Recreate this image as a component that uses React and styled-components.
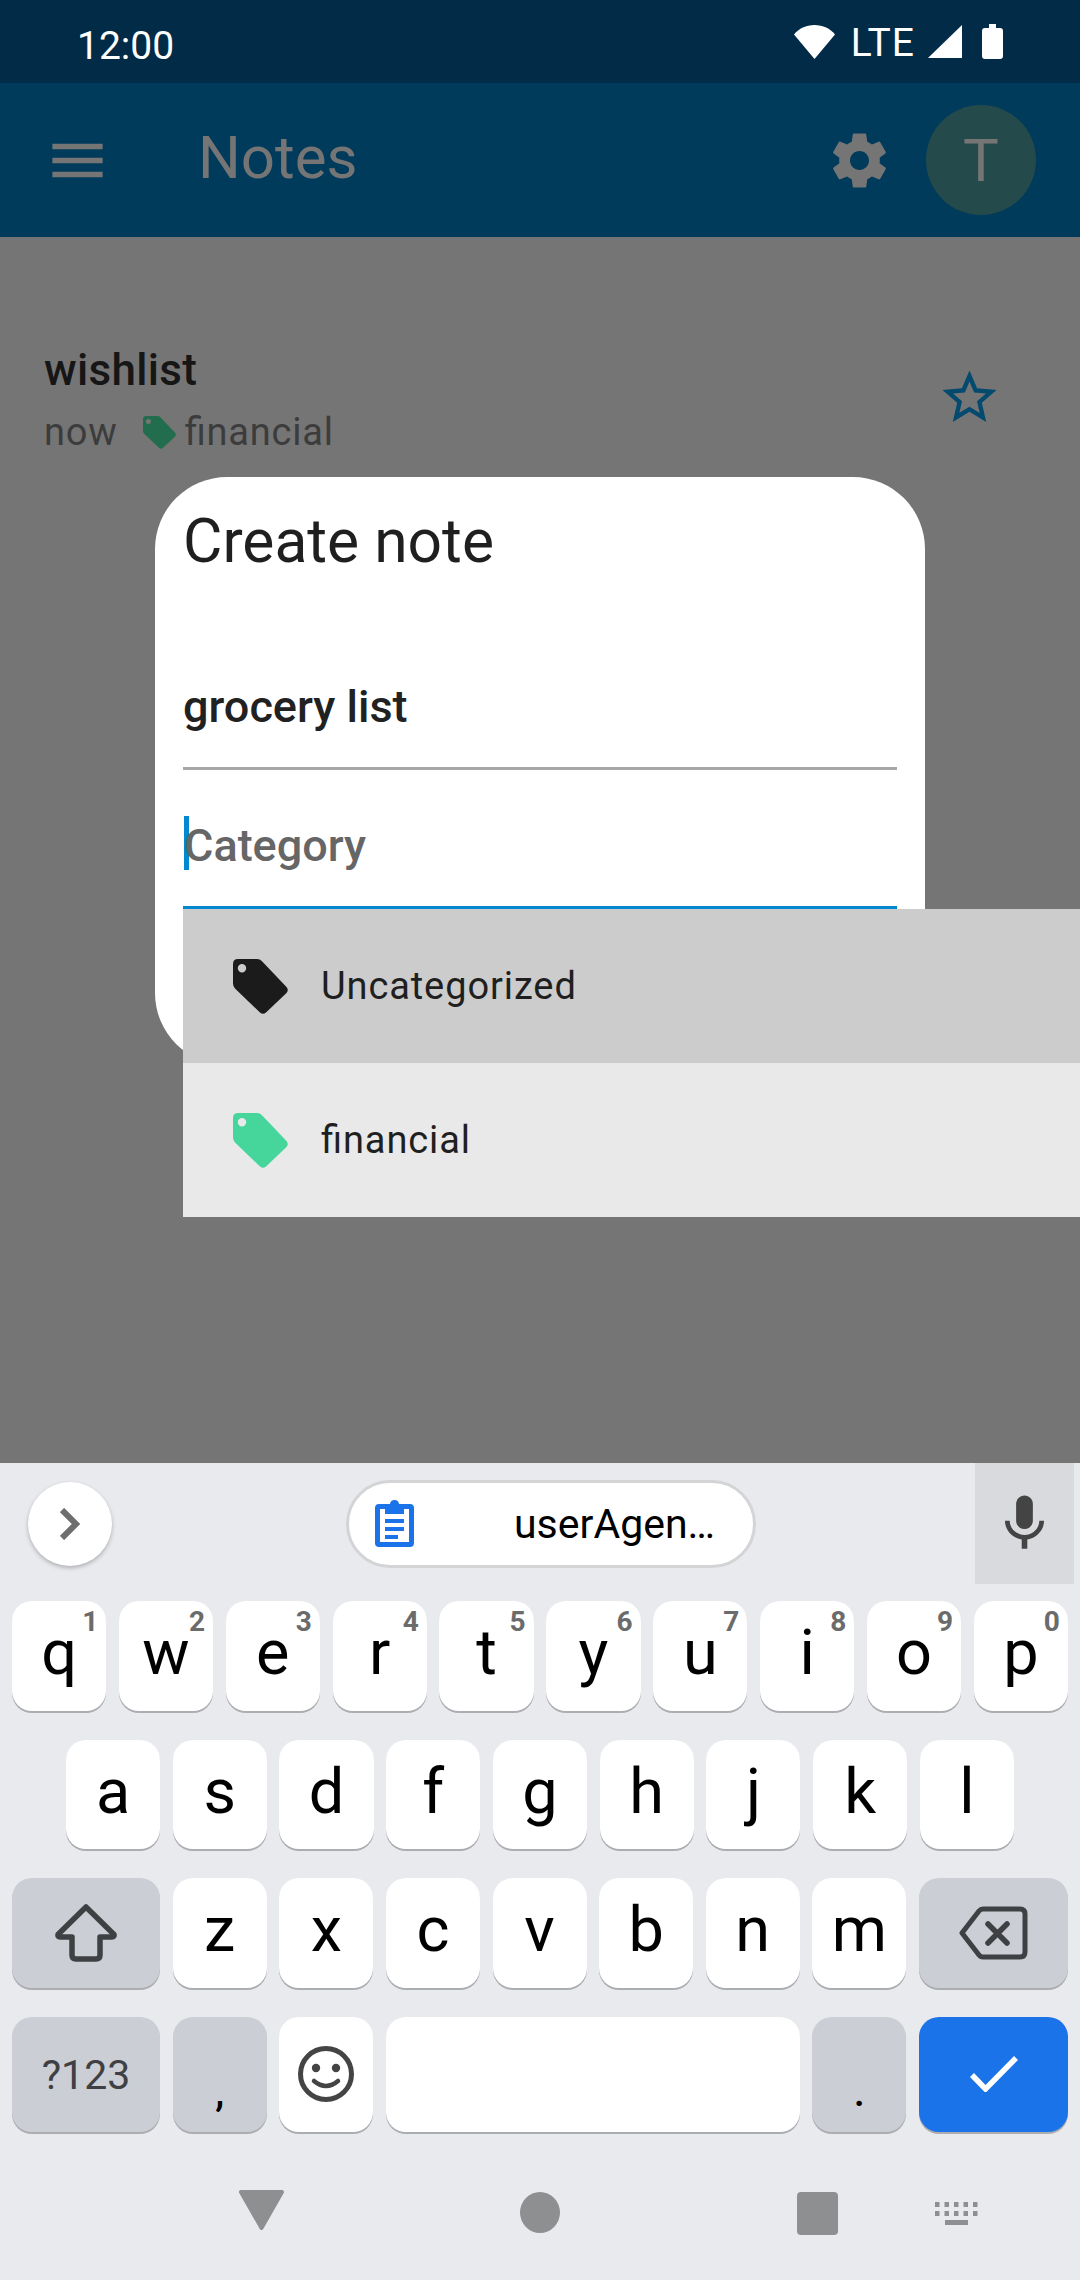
import React from "react";
import styled, { createGlobalStyle } from "styled-components";

const Global = createGlobalStyle`
  html, body { margin: 0; padding: 0; background: #757575; }
  * { box-sizing: border-box; }
  body { font-family: Roboto, "Noto Sans", sans-serif; }
`;

const Page = styled.div`
  width: 1080px; height: 2280px; display: flex; flex-direction: column; overflow: hidden;
`;
const StatusBar = styled.div`
  height: 83px; background: #012b46; display: flex; align-items: center; padding: 0 77px 0 77px; color: #fff;
`;
const Time = styled.div`
  font-size: 39px; line-height: 46px; margin-top: 9px; margin-right: auto;
`;
const Lte = styled.div`
  font-size: 39px; line-height: 46px; margin: 2px 13px 0 16px; letter-spacing: 1px;
`;
const BatteryIcon = styled.svg` margin-left: 20px; display: block; `;
const Plain = styled.svg` display: block; flex: none; `;
const Header = styled.div`
  height: 154px; background: #013b5b; display: flex; align-items: center; padding: 0 44px; color: #757575;
`;
const Title = styled.div`
  font-size: 60px; line-height: 70px; margin-left: 87px; margin-bottom: 4px;
`;
const Gear = styled.svg` display: block; margin-left: auto; margin-right: 34px; `;
const Avatar = styled.div`
  width: 110px; height: 110px; border-radius: 50%; background: #254a4c; color: #757575;
  display: flex; align-items: center; justify-content: center; font-size: 60px;
`;
const Body = styled.div`
  position: relative; flex: 1; background: #757575; padding: 108px 78px 0 44px;
`;
const NoteItem = styled.div`
  display: flex; justify-content: space-between; align-items: center;
`;
const NoteText = styled.div` display: flex; flex-direction: column; gap: 14px; `;
const NoteName = styled.div`
  font-size: 44px; line-height: 50px; font-weight: 500; color: #161616; letter-spacing: 0.3px;
`;
const NoteMeta = styled.div`
  display: flex; align-items: center; font-size: 38px; line-height: 46px; color: #3c3c3c; letter-spacing: 0.8px;
  font-feature-settings: "liga" 1;
`;
const MetaTag = styled.svg` display: block; margin: 0 9px 0 25px; `;
const Star = styled.svg` display: block; margin-bottom: 6px; `;
const Dialog = styled.div`
  position: absolute; left: 155px; top: 240px; width: 770px; height: 588px; background: #fff;
  border-radius: 72px; padding: 30px 28px 0 28px;
`;
const DialogTitle = styled.div`
  font-size: 60.5px; line-height: 70px; color: #1f1f1f; margin-bottom: 54px;
`;
const Field = styled.div`
  height: 139px; padding: 46px 0 36px; border-bottom: 3px solid ${p => p.$focus ? "#0288d1" : "#a6a6a6"};
  font-size: 45px; line-height: 54px; font-weight: 500; color: ${p => p.$focus ? "#666" : "#212121"};
  display: flex; align-items: flex-start;
`;
const FieldText = styled.span` margin-top: 3px; `;
const Caret = styled.span`
  width: 5px; height: 54px; background: #0288d1; margin-left: 1px; margin-right: -5px; flex: none;
`;
const Dropdown = styled.div`
  position: absolute; left: 183px; right: 0; top: 672px;
`;
const Option = styled.div`
  height: 154px; background: ${p => p.$bg}; display: flex; align-items: center; padding-left: 50px;
  font-size: 38px; color: #1f1f1f; letter-spacing: 0.9px; font-feature-settings: "liga" 1;
`;
const OptionTag = styled.svg` display: block; margin-right: 33px; flex: none; `;

const Keyboard = styled.div`
  height: 817px; background: #e8eaed; display: flex; flex-direction: column;
`;
const Strip = styled.div`
  height: 138px; display: flex; align-items: flex-start; padding-left: 28px;
`;
const StripInner = styled.div`
  height: 121px; display: flex; align-items: center; flex: 1;
`;
const ExpandBtn = styled.div`
  width: 84px; height: 84px; border-radius: 50%; background: #fff; box-shadow: 0 2px 4px rgba(0,0,0,.25);
  display: flex; align-items: center; justify-content: center;
`;
const Pill = styled.div`
  width: 410px; height: 88px; margin-left: 234px; border-radius: 44px; background: #fff; border: 3px solid #d3d4d6;
  display: flex; align-items: center; padding-left: 26px; font-size: 41px; color: #000;
`;
const PillText = styled.span` margin-left: 100px; white-space: nowrap; `;
const MicPanel = styled.div`
  width: 99px; height: 121px; background: #d9dade; margin-left: 219px; display: flex; align-items: center; justify-content: center;
`;
const Rows = styled.div`
  display: flex; flex-direction: column; gap: 29px; padding: 0 12px;
`;
const Row = styled.div`
  display: flex; gap: 12.67px; padding: 0 ${p => p.$inset || 0}px;
`;
const Key = styled.div`
  position: relative; height: ${p => p.$h || 109.5}px; flex: ${p => p.$w ? `0 0 ${p.$w}px` : "1 1 0"};
  border-radius: 20px;
  background: ${p => p.$bg || "#fff"};
  box-shadow: 0 2px 0 #acadb0;
  display: flex; align-items: center; justify-content: center;
  color: #000; font-size: 63px; line-height: 72px; padding-bottom: ${p => p.$pb ?? 5}px;
`;
const Hint = styled.span`
  position: absolute; right: 8px; top: 5px; font-size: 28px; line-height: 32px; font-weight: 700; color: #6b6b6b;
`;
const ModKey = styled.span`
  font-size: 41px; line-height: 48px; color: #3f4043; margin-top: 2px;
`;
const Punct = styled.span`
  font-size: 40px; line-height: 48px; color: #000; font-weight: 500; margin-top: 38px;
`;
const NavBar = styled.div`
  flex: 1; display: flex; align-items: flex-start; padding: 57px 0 0 238px;
`;
const NavItem = styled.svg` display: block; margin-right: ${p => p.$mr}px; margin-top: ${p => p.$mt || 0}px; flex: none; `;

const tagPath = "M5 0H24Q27 0 29 2.2L53.5 28Q56 31 53.5 34L33 53.5Q30 56 27 53.5L2 29.5Q0 27.5 0 24.5V5Q0 0 5 0ZM9 5A4.2 4.2 0 1 0 9 13.4A4.2 4.2 0 1 0 9 5Z";
const TagIcon = ({ color, size, as: C = OptionTag }) => (
  <C width={size} height={size} viewBox="0 0 55 55">
    <path d={tagPath} fill={color} fillRule="evenodd" />
  </C>
);

const top = ["q","w","e","r","t","y","u","i","o","p"];
const hints = ["1","2","3","4","5","6","7","8","9","0"];
const mid = ["a","s","d","f","g","h","j","k","l"];
const low = ["z","x","c","v","b","n","m"];
const MOD = "#cbced5";

export default function App() {
  return (
    <Page>
      <Global />
      <StatusBar>
        <Time>12:00</Time>
        <Plain width="41" height="34" viewBox="0 0 41 34">
          <path d="M20.5 34L0 9.5C5 3.5 12 0 20.5 0S36 3.5 41 9.5Z" fill="#fff" />
        </Plain>
        <Lte>LTE</Lte>
        <Plain width="34" height="33" viewBox="0 0 34 33">
          <path d="M0 33L34 0V33Z" fill="#fff" />
        </Plain>
        <BatteryIcon width="21" height="35" viewBox="0 0 21 35">
          <path d="M7 0H14V4H18Q21 4 21 7V32Q21 35 18 35H3Q0 35 0 32V7Q0 4 3 4H7Z" fill="#fff" />
        </BatteryIcon>
      </StatusBar>
      <Header>
        <Plain width="67" height="67" viewBox="0 0 24 24">
          <path d="M3 18h18v-2H3v2zm0-5h18v-2H3v2zm0-7v2h18V6H3z" fill="#757575" />
        </Plain>
        <Title>Notes</Title>
        <Gear width="65" height="65" viewBox="0 0 24 24">
          <path fill="#757575" d="M19.43 12.98c.04-.32.07-.64.07-.98s-.03-.66-.07-.98l2.11-1.65c.19-.15.24-.42.12-.64l-2-3.46c-.12-.22-.39-.3-.61-.22l-2.49 1c-.52-.4-1.08-.73-1.69-.98l-.38-2.65C14.46 2.18 14.25 2 14 2h-4c-.25 0-.46.18-.49.42l-.38 2.65c-.61.25-1.17.59-1.69.98l-2.49-1c-.23-.09-.49 0-.61.22l-2 3.46c-.13.22-.07.49.12.64l2.11 1.65c-.04.32-.07.65-.07.98s.03.66.07.98l-2.11 1.65c-.19.15-.24.42-.12.64l2 3.46c.12.22.39.3.61.22l2.49-1c.52.4 1.08.73 1.69.98l.38 2.65c.03.24.24.42.49.42h4c.25 0 .46-.18.49-.42l.38-2.65c.61-.25 1.17-.59 1.69-.98l2.49 1c.23.09.49 0 .61-.22l2-3.46c.12-.22.07-.49-.12-.64l-2.11-1.65zM12 15.5c-1.93 0-3.5-1.57-3.5-3.5s1.57-3.5 3.5-3.5 3.5 1.57 3.5 3.5-1.57 3.5-3.5 3.5z" />
        </Gear>
        <Avatar>T</Avatar>
      </Header>
      <Body>
        <NoteItem>
          <NoteText>
            <NoteName>wishlist</NoteName>
            <NoteMeta>
              now
              <TagIcon as={MetaTag} color="#226d4d" size={33} />
              financial
            </NoteMeta>
          </NoteText>
          <Star width="65" height="65" viewBox="0 0 24 24">
            <path fill="#034a6e" d="M22 9.24l-7.19-.62L12 2 9.19 8.63 2 9.24l5.46 4.73L5.82 21 12 17.27 18.18 21l-1.63-7.03L22 9.24zM12 15.4l-3.76 2.27 1-4.28-3.32-2.88 4.38-.38L12 6.1l1.71 4.04 4.38.38-3.32 2.88 1 4.28L12 15.4z" />
          </Star>
        </NoteItem>
        <Dialog>
          <DialogTitle>Create note</DialogTitle>
          <Field><FieldText>grocery list</FieldText></Field>
          <Field $focus><Caret /><FieldText>Category</FieldText></Field>
        </Dialog>
        <Dropdown>
          <Option $bg="#cccccc">
            <TagIcon color="#1b1b1b" size={55} />
            Uncategorized
          </Option>
          <Option $bg="#e9e9e9">
            <TagIcon color="#46d69c" size={55} />
            financial
          </Option>
        </Dropdown>
      </Body>
      <Keyboard>
        <Strip>
          <StripInner>
            <ExpandBtn>
              <Plain width="20" height="32" viewBox="0 0 20 32">
                <path d="M2 2L16 16L2 30" fill="none" stroke="#6e6e6e" strokeWidth="6" />
              </Plain>
            </ExpandBtn>
            <Pill>
              <Plain width="39" height="47" viewBox="0 0 39 47">
                <path d="M12 4H15Q15.5 0 19.5 0T24 4H35Q39 4 39 8V43Q39 47 35 47H4Q0 47 0 43V8Q0 4 4 4Z M5 9V42H34V9H29V14H10V9Z" fill="#1a73e8" fillRule="evenodd" />
                <path d="M10 19H29V23H10ZM10 27H29V31H10ZM10 35H23V39H10Z" fill="#1a73e8" />
              </Plain>
              <PillText>userAgen…</PillText>
            </Pill>
            <MicPanel>
              <Plain width="67" height="67" viewBox="0 0 24 24">
                <path fill="#444" d="M12 14c1.66 0 2.99-1.34 2.99-3L15 5c0-1.66-1.34-3-3-3S9 3.34 9 5v6c0 1.66 1.34 3 3 3zm5.3-3c0 3-2.54 5.1-5.3 5.1S6.7 14 6.7 11H5c0 3.41 2.72 6.23 6 6.72V21h2v-3.28c3.28-.48 6-3.3 6-6.72h-1.7z" />
              </Plain>
            </MicPanel>
          </StripInner>
        </Strip>
        <Rows>
          <Row>
            {top.map((k, i) => (
              <Key key={k}>{k}<Hint>{hints[i]}</Hint></Key>
            ))}
          </Row>
          <Row $inset={54}>
            {mid.map(k => <Key key={k}>{k}</Key>)}
          </Row>
          <Row>
            <Key $w={148} $bg={MOD} $pb={0}>
              <Plain width="62" height="58" viewBox="0 0 62 58">
                <path d="M31 3L59 30.5Q59.5 33 57 33H45V51Q45 55 41 55H21Q17 55 17 51V33H5Q2.5 33 3 30.5Z" fill="none" stroke="#3f4043" strokeWidth="5.5" strokeLinejoin="round" />
              </Plain>
            </Key>
            {low.map(k => <Key key={k}>{k}</Key>)}
            <Key $w={149} $bg={MOD} $pb={0}>
              <Plain width="69" height="54" viewBox="0 0 69 54">
                <path d="M3 27L20 5Q21.5 3 24 3H61Q66 3 66 8V46Q66 51 61 51H24Q21.5 51 20 49Z" fill="none" stroke="#3f4043" strokeWidth="5" strokeLinejoin="round" />
                <path d="M29 18L48 37M48 18L29 37" fill="none" stroke="#3f4043" strokeWidth="5.5" strokeLinecap="round" />
              </Plain>
            </Key>
          </Row>
          <Row>
            <Key $w={148} $h={115} $bg={MOD} $pb={0}><ModKey>?123</ModKey></Key>
            <Key $w={94} $h={115} $bg={MOD} $pb={0}><Punct>,</Punct></Key>
            <Key $w={94} $h={115} $pb={0}>
              <Plain width="56" height="56" viewBox="0 0 56 56">
                <circle cx="28" cy="28" r="25.5" fill="none" stroke="#444" strokeWidth="5" />
                <circle cx="18" cy="22" r="4.2" fill="#444" />
                <circle cx="38" cy="22" r="4.2" fill="#444" />
                <path d="M16 35Q28 45 40 35" fill="none" stroke="#444" strokeWidth="4.5" strokeLinecap="round" />
              </Plain>
            </Key>
            <Key $h={115} />
            <Key $w={94} $h={115} $bg={MOD} $pb={0}><Punct>.</Punct></Key>
            <Key $w={149} $h={115} $bg="#1a73e8" $pb={0}>
              <Plain width="48" height="36" viewBox="0 0 48 36">
                <path d="M2 19L15.5 33L46 2" fill="none" stroke="#fff" strokeWidth="5.5" />
              </Plain>
            </Key>
          </Row>
        </Rows>
        <NavBar>
          <NavItem $mr={235} width="47" height="42" viewBox="0 0 47 42">
            <path d="M3 3H44L23.5 39Z" fill="#8e8f91" stroke="#8e8f91" strokeWidth="4" strokeLinejoin="round" />
          </NavItem>
          <NavItem $mr={237} $mt={3} width="40" height="41" viewBox="0 0 40 41">
            <ellipse cx="20" cy="20.5" rx="20" ry="20.5" fill="#8e8f91" />
          </NavItem>
          <NavItem $mr={97} $mt={3} width="41" height="43" viewBox="0 0 41 43">
            <rect width="41" height="43" rx="4" fill="#8e8f91" />
          </NavItem>
          <NavItem $mr={0} $mt={13} width="43" height="23" viewBox="0 0 43 23">
            <path fill="#8e8f91" d="M0 0h4.5v5H0zM9.5 0h4.5v5H9.5zM19 0h4.5v5H19zM28.5 0h4.5v5h-4.5zM38 0h4.5v5H38zM0 9h4.5v5H0zM9.5 9h4.5v5H9.5zM19 9h4.5v5H19zM28.5 9h4.5v5h-4.5zM38 9h4.5v5H38zM10 18h23v5H10z" />
          </NavItem>
        </NavBar>
      </Keyboard>
    </Page>
  );
}
